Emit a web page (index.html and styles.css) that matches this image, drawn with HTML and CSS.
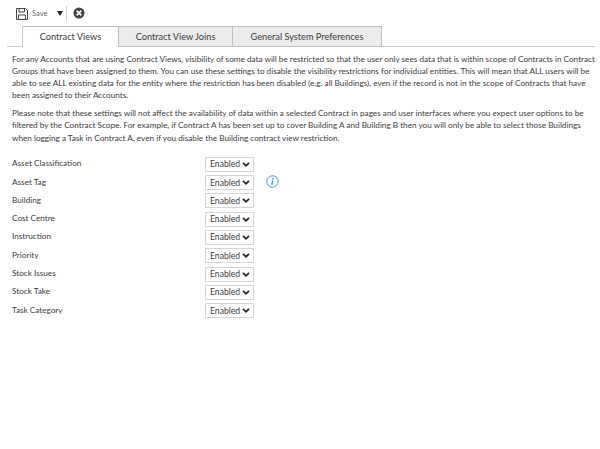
FILE: index.html
```html
<!DOCTYPE html>
<html lang="en">
<head>
<meta charset="utf-8">
<title>Contract Views</title>
<link rel="stylesheet" href="styles.css">
</head>
<body>
<div class="toolbar">
  <svg class="save-icon" width="12" height="13" viewBox="0 0 12 13"><path d="M.5 1.500h9l2 2v9H.5z M3 1.500v3.500h5.500V1.500 M2.500 12.500V8h7v4.500" fill="none" stroke="#444" stroke-width="1"/></svg>
  <span class="save-label">Save</span>
  <span class="caret"></span>
  <span class="divider"></span>
  <svg class="close-icon" width="12" height="12" viewBox="0 0 13 13"><circle cx="6.500" cy="6.500" r="6" fill="#444"/><path d="M4 4l5 5M9 4l-5 5" stroke="#fff" stroke-width="1.800"/></svg>
</div>
<div class="tabs">
  <div class="tab tab-active tab-1">Contract Views</div>
  <div class="tab tab-2">Contract View Joins</div>
  <div class="tab tab-3">General System Preferences</div>
</div>
<div class="content">
  <p class="para">For any Accounts that are using Contract Views, visibility of some data will be restricted so that the user only sees data that is within scope of Contracts in Contract<br>Groups that have been assigned to them. You can use these settings to disable the visibility restrictions for individual entities. This will mean that ALL users will be<br>able to see ALL existing data for the entity where the restriction has been disabled (e.g. all Buildings), even if the record is not in the scope of Contracts that have<br>been assigned to their Accounts.</p>
  <p class="para">Please note that these settings will not affect the availability of data within a selected Contract in pages and user interfaces where you expect user options to be<br>filtered by the Contract Scope. For example, if Contract A has been set up to cover Building A and Building B then you will only be able to select those Buildings<br>when logging a Task in Contract A, even if you disable the Building contract view restriction.</p>
  <div class="rows">
    <div class="row"><span class="label">Asset Classification</span><select class="sel"><option>Enabled</option></select></div>
    <div class="row"><span class="label">Asset Tag</span><select class="sel"><option>Enabled</option></select><svg class="info" width="13" height="13" viewBox="0 0 13 13"><circle cx="6.500" cy="6.500" r="5.700" fill="none" stroke="#3a9ad9" stroke-width="1"/><circle cx="6.900" cy="3.700" r="0.900" fill="#3a9ad9"/><path d="M6.700 5.500L5.900 9.800" stroke="#3a9ad9" stroke-width="1.400" fill="none"/></svg></div>
    <div class="row"><span class="label">Building</span><select class="sel"><option>Enabled</option></select></div>
    <div class="row"><span class="label">Cost Centre</span><select class="sel"><option>Enabled</option></select></div>
    <div class="row"><span class="label">Instruction</span><select class="sel"><option>Enabled</option></select></div>
    <div class="row"><span class="label">Priority</span><select class="sel"><option>Enabled</option></select></div>
    <div class="row"><span class="label">Stock Issues</span><select class="sel"><option>Enabled</option></select></div>
    <div class="row"><span class="label">Stock Take</span><select class="sel"><option>Enabled</option></select></div>
    <div class="row"><span class="label">Task Category</span><select class="sel"><option>Enabled</option></select></div>
  </div>
</div>
</body>
</html>
```
FILE: styles.css
```css
html, body {
  margin: 0;
  padding: 0;
  background: #fff;
}
body {
  font-family: "Lato", "Open Sans", sans-serif;
  font-size: 8.2px;
  color: #3c3c3c;
  width: 600px;
  height: 449px;
  overflow: hidden;
}
.toolbar {
  display: flex;
  align-items: center;
  height: 26px;
  padding-left: 16px;
  box-sizing: border-box;
}
.save-label {
  font-size: 7.5px;
  margin-left: 4px;
  color: #666;
}
.caret {
  width: 0;
  height: 0;
  border-left: 3px solid transparent;
  border-right: 3px solid transparent;
  border-top: 5px solid #222;
  margin-left: 10px;
}
.divider {
  width: 1px;
  height: 15px;
  background: #c4d4e8;
  margin-left: 3px;
}
.close-icon {
  margin-left: 6px;
  margin-bottom: 1px;
}
.tabs {
  display: flex;
  height: 20px;
  margin: 0 5px 0 7px;
  padding-left: 15px;
  border-bottom: 1px solid #c8c8c8;
}
.tab {
  box-sizing: border-box;
  height: 21px;
  border: 1px solid #c0c0c0;
  border-left: 0;
  background: #ebebeb;
  text-align: center;
  line-height: 20px;
  font-size: 9.2px;
}
.tab-active {
  background: #fff;
  border-left: 1px solid #c8c8c8;
  border-bottom: 0;
}
.tab-1 { width: 97px; }
.tab-2 { width: 114px; }
.tab-3 { width: 149px; }
.content {
  padding: 6px 8px 0 12px;
}
.para {
  margin: 0 0 6px;
  line-height: 12.100px;
  white-space: nowrap;
}
.rows {
  margin-top: 10.500px;
}
.row {
  display: flex;
  align-items: center;
  height: 18.300px;
}
.label {
  width: 193px;
}
.sel {
  appearance: none;
  width: 49px;
  height: 15px;
  margin-top: 2px;
  font-family: inherit;
  font-size: 8.6px;
  color: #3c3c3c;
  border: 1px solid #d6d6d6;
  padding: 0 0 0 4px;
  background: #fff url("data:image/svg+xml,%3Csvg xmlns='http://www.w3.org/2000/svg' width='8' height='5'%3E%3Cpath d='M1 .8l3 3 3-3' fill='none' stroke='%23222' stroke-width='1.700'/%3E%3C/svg%3E") no-repeat right 3px center;
}
.info {
  margin-left: 12px;
}
```
